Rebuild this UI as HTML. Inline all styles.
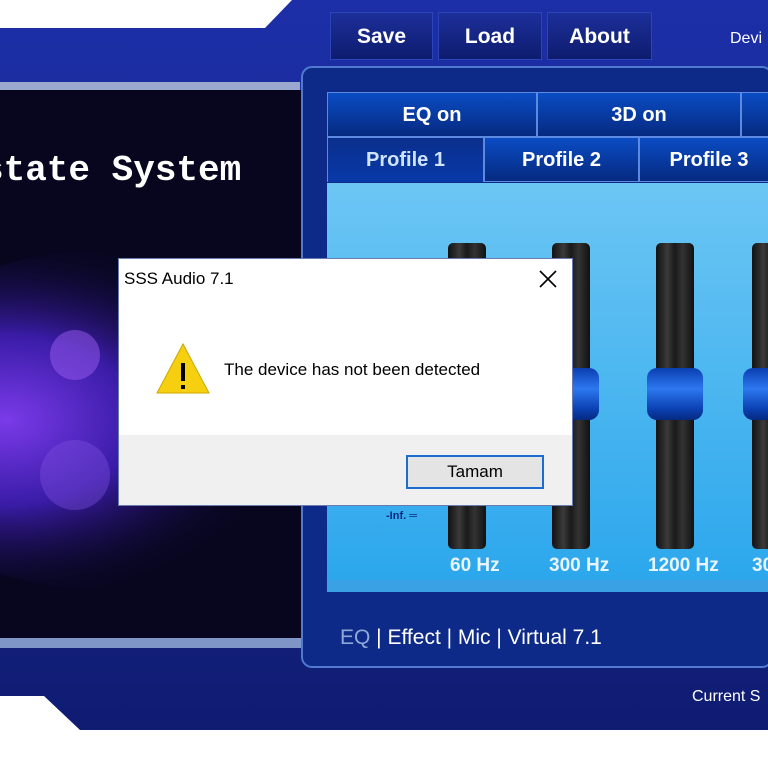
<!DOCTYPE html>
<html><head><meta charset="utf-8"><style>
*{margin:0;padding:0;box-sizing:border-box}
body{width:768px;height:768px;background:#fff;position:relative;overflow:hidden;font-family:"Liberation Sans",sans-serif}
.abs{position:absolute}
.btn{position:absolute;top:12px;height:48px;background:linear-gradient(#1c2f9a,#0e1c6e);border:1px solid #2b44b8;color:#fff;font-weight:bold;font-size:21px;text-align:center;line-height:48px}
.tab{position:absolute;height:45px;background:linear-gradient(#0a4cc4,#062a80);border:1px solid #5c8ae0;color:#fff;font-weight:bold;font-size:20px;text-align:center;line-height:45px}
.track{position:absolute;width:38px;top:243px;height:306px;background:linear-gradient(90deg,#111,#3a3a3a 30%,#1a1a1a 50%,#333 70%,#111);border-radius:5px}
.knob{position:absolute;width:56px;height:52px;top:368px;background:linear-gradient(#0a3fb0,#2d78f0 40%,#0a3fb0 80%,#062a80);border-radius:10px}
.lbl{position:absolute;top:555px;color:#e8f4ff;font-weight:bold;font-size:19px}
</style></head><body>
<svg class="abs" style="left:0;top:0" width="768" height="768">
<defs>
<linearGradient id="g1" x1="0" y1="0" x2="0" y2="1"><stop offset="0" stop-color="#1d2fa8"/><stop offset="1" stop-color="#101c72"/></linearGradient>
<radialGradient id="pg" cx="0.3" cy="0.5" r="0.55"><stop offset="0" stop-color="#7a3ae8"/><stop offset="0.45" stop-color="#3a1ca8"/><stop offset="1" stop-color="#080620" stop-opacity="0"/></radialGradient>
<linearGradient id="sky" x1="0" y1="0" x2="0" y2="1"><stop offset="0" stop-color="#6cc6f4"/><stop offset="1" stop-color="#2aa6ec"/></linearGradient>
</defs>
<path d="M0 28 L265 28 L292 0 L768 0 L768 730 L80 730 L44 696 L0 696 Z" fill="url(#g1)"/>
<rect x="0" y="82" width="300" height="8" fill="#9aa8d0"/>
<rect x="0" y="90" width="302" height="548" fill="#07061e"/>
<ellipse cx="110" cy="420" rx="260" ry="170" fill="url(#pg)"/>
<circle cx="75" cy="355" r="25" fill="#9a5cf0" opacity="0.5"/>
<circle cx="75" cy="475" r="35" fill="#8050e0" opacity="0.4"/>
<rect x="0" y="638" width="302" height="10" fill="#7f95c8"/>
<rect x="302" y="67" width="470" height="600" rx="10" fill="#0d2a88" stroke="#4f7ad0" stroke-width="2"/>
<rect x="327" y="183" width="441" height="409" fill="url(#sky)"/>
<rect x="327" y="580" width="441" height="12" fill="#3aa2e4"/>
</svg>
<div class="btn" style="left:330px;width:103px">Save</div>
<div class="btn" style="left:438px;width:104px">Load</div>
<div class="btn" style="left:547px;width:105px">About</div>
<div class="abs" style="left:730px;top:30px;color:#fff;font-size:16px">Devi</div>
<div class="abs" style="left:-18px;top:150px;color:#fff;font-family:'Liberation Mono',monospace;font-weight:bold;font-size:36px">state System</div>
<div class="tab" style="left:327px;top:92px;width:210px">EQ on</div>
<div class="tab" style="left:537px;top:92px;width:204px">3D on</div>
<div class="tab" style="left:741px;top:92px;width:40px"></div>
<div class="tab" style="left:327px;top:137px;width:157px;background:linear-gradient(#0a2e8c,#083aa8);color:#cfe4ff;border-bottom:none">Profile 1</div>
<div class="tab" style="left:484px;top:137px;width:155px">Profile 2</div>
<div class="tab" style="left:639px;top:137px;width:140px">Profile 3</div>
<div class="track" style="left:448px"></div><div class="track" style="left:552px"></div><div class="track" style="left:656px"></div><div class="track" style="left:752px"></div>
<div class="knob" style="left:543px"></div><div class="knob" style="left:647px"></div><div class="knob" style="left:743px"></div>
<div class="abs" style="left:386px;top:510px;color:#0a2a80;font-size:11px;font-weight:bold">-Inf. ═</div>
<div class="lbl" style="left:450px">60 Hz</div>
<div class="lbl" style="left:549px">300 Hz</div>
<div class="lbl" style="left:648px">1200 Hz</div>
<div class="lbl" style="left:752px">30</div>
<div class="abs" style="left:340px;top:626px;color:#fff;font-size:21px;white-space:pre"><span style="color:#8ea8d8">EQ</span> | Effect | Mic | Virtual 7.1</div>
<div class="abs" style="left:692px;top:688px;color:#fff;font-size:16px">Current S</div>
<div class="abs" style="left:118px;top:258px;width:455px;height:248px;background:#fff;border:1px solid #6a7bb0;overflow:hidden">
<div class="abs" style="left:0;top:176px;width:455px;height:72px;background:#f0f0f0"></div>
<div class="abs" style="left:5px;top:10px;font-size:17px;color:#000">SSS Audio 7.1</div>
<svg class="abs" style="left:419px;top:10px" width="20" height="20"><path d="M2 2 L18 18 M18 2 L2 18" stroke="#000" stroke-width="1.6"/></svg>
<div class="abs" style="left:36px;top:82px;width:56px;height:56px"><svg width="56" height="56"><path d="M28 3 L54 52 L2 52 Z" fill="#f6d010" stroke="#c9a800"/><rect x="26" y="22" width="4" height="18" fill="#000"/><rect x="26" y="44" width="4" height="4" fill="#000"/></svg></div>
<div class="abs" style="left:105px;top:101px;font-size:17px;color:#000">The device has not been detected</div>
<div class="abs" style="left:287px;top:196px;width:138px;height:34px;border:2px solid #1a6ed0;background:#e4e4e4;text-align:center;line-height:30px;font-size:17px;color:#000">Tamam</div>
</div>
</body></html>
